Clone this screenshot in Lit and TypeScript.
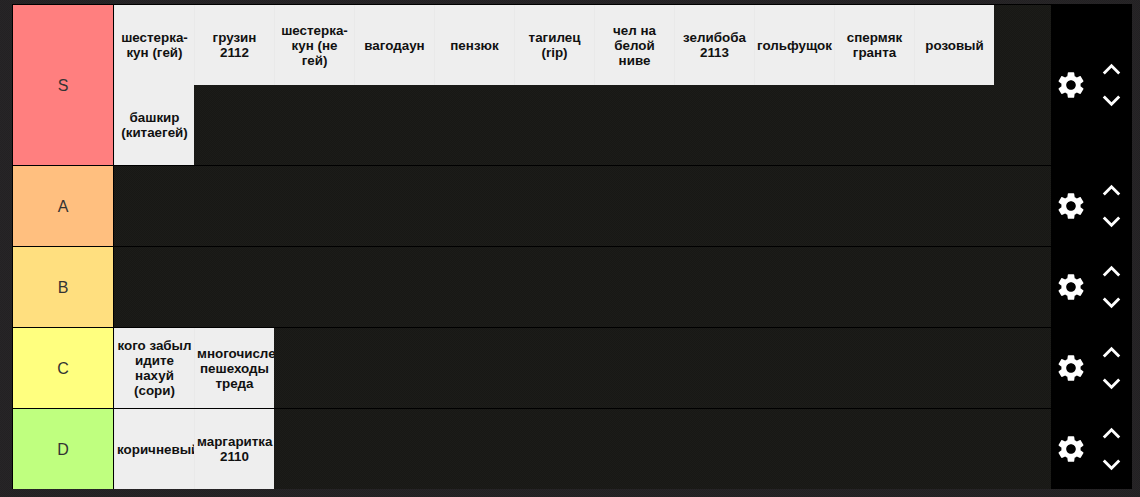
import {LitElement, html, css, svg} from 'lit';
import {customElement} from 'lit/decorators.js';

const tiers = [
  {
    label: 'S',
    color: '#ff7f7f',
    items: [
      'шестерка-кун (гей)',
      'грузин 2112',
      'шестерка-кун (не гей)',
      'вагодаун',
      'пензюк',
      'тагилец (rip)',
      'чел на белой ниве',
      'зелибоба 2113',
      'гольфущок',
      'спермяк гранта',
      'розовый',
      'башкир (китаегей)',
    ],
  },
  {label: 'A', color: '#ffbf7f', items: []},
  {label: 'B', color: '#ffdf7f', items: []},
  {label: 'C', color: '#ffff7f', items: ['кого забыл идите нахуй (сори)', 'многочисле пешеходы треда']},
  {label: 'D', color: '#bfff7f', items: ['коричневый', 'маргаритка 2110']},
];

const gearPath = svg`<path d="M19.14 12.94c.04-.3.06-.61.06-.94 0-.32-.02-.64-.07-.94l2.03-1.58c.18-.14.23-.41.12-.61l-1.92-3.32c-.12-.22-.37-.29-.59-.22l-2.39.96c-.5-.38-1.03-.7-1.62-.94l-.36-2.54c-.04-.24-.24-.41-.48-.41h-3.84c-.24 0-.43.17-.47.41l-.36 2.54c-.59.24-1.13.57-1.62.94l-2.39-.96c-.22-.08-.47 0-.59.22L2.74 8.87c-.12.21-.08.47.12.61l2.03 1.58c-.05.3-.09.63-.09.94s.02.64.07.94l-2.03 1.58c-.18.14-.23.41-.12.61l1.92 3.32c.12.22.37.29.59.22l2.39-.96c.5.38 1.03.7 1.62.94l.36 2.54c.05.24.24.41.48.41h3.84c.24 0 .44-.17.47-.41l.36-2.54c.59-.24 1.13-.56 1.62-.94l2.39.96c.22.08.47 0 .59-.22l1.92-3.32c.12-.22.07-.47-.12-.61l-2.01-1.58zM12 15.6c-1.98 0-3.6-1.62-3.6-3.6s1.62-3.6 3.6-3.6 3.6 1.62 3.6 3.6-1.62 3.6-3.6 3.6z"/>`;
const upPath = svg`<path d="M12 8l-6 6 1.41 1.41L12 10.83l4.59 4.58L18 14z"/>`;
const downPath = svg`<path d="M16.59 8.59L12 13.17 7.41 8.59 6 10l6 6 6-6z"/>`;

@customElement('app-root')
export class AppRoot extends LitElement {
  static override styles = css`
    :host {
      display: block;
      height: 497px;
      overflow: hidden;
      box-sizing: border-box;
      padding: 4px 8px 0 12px;
      background: repeating-conic-gradient(#272527 0 25%, #232123 0 50%) 0 0 / 2px 2px;
      font-family: 'Liberation Sans', Arial, sans-serif;
    }
    .list {
      background: #000;
      padding: 1px 0 0 1px;
    }
    .row {
      display: flex;
      min-height: 80px;
      margin-bottom: 1px;
    }
    .label {
      flex: 0 0 100px;
      box-sizing: border-box;
      padding-top: 2px;
      display: flex;
      align-items: center;
      justify-content: center;
      font-size: 16px;
      color: #333;
    }
    .items {
      flex: 1;
      display: flex;
      flex-wrap: wrap;
      align-content: flex-start;
      margin-left: 1px;
      background: repeating-conic-gradient(#1c1c19 0 25%, #181815 0 50%) 0 0 / 2px 2px;
    }
    .item {
      box-sizing: border-box;
      width: 80px;
      height: 80px;
      padding: 0 2px;
      display: flex;
      align-items: center;
      justify-content: center;
      overflow: hidden;
      text-align: center;
      background: #eee;
      border-left: 1px solid #e9e9e9;
      color: #111;
      font-size: 13.4px;
      font-weight: bold;
      line-height: 15px;
    }
    .item span {
      min-width: 0;
    }
    .controls {
      flex: 0 0 81px;
      display: flex;
      align-items: center;
      background: #000;
      padding-left: 4px;
      box-sizing: border-box;
    }
    .gear {
      display: block;
      width: 32px;
      height: 32px;
      fill: #fff;
    }
    .arrows {
      margin: -1px 0 0 7px;
      display: flex;
      flex-direction: column;
    }
    .arrow {
      display: block;
      width: 35px;
      height: 31px;
      fill: #fff;
    }
  `;

  override render() {
    return html`
      <div class="list">
        ${tiers.map(
          (t) => html`
            <div class="row">
              <div class="label" style="background:${t.color}">${t.label}</div>
              <div class="items">
                ${t.items.map((i) => html`<div class="item"><span>${i}</span></div>`)}
              </div>
              <div class="controls">
                <svg class="gear" viewBox="0 0 24 24">${gearPath}</svg>
                <div class="arrows">
                  <svg class="arrow" viewBox="0 1.37 24 21.26">${upPath}</svg>
                  <svg class="arrow" viewBox="0 1.37 24 21.26">${downPath}</svg>
                </div>
              </div>
            </div>
          `
        )}
      </div>
    `;
  }
}

declare global {
  interface HTMLElementTagNameMap {
    'app-root': AppRoot;
  }
}
